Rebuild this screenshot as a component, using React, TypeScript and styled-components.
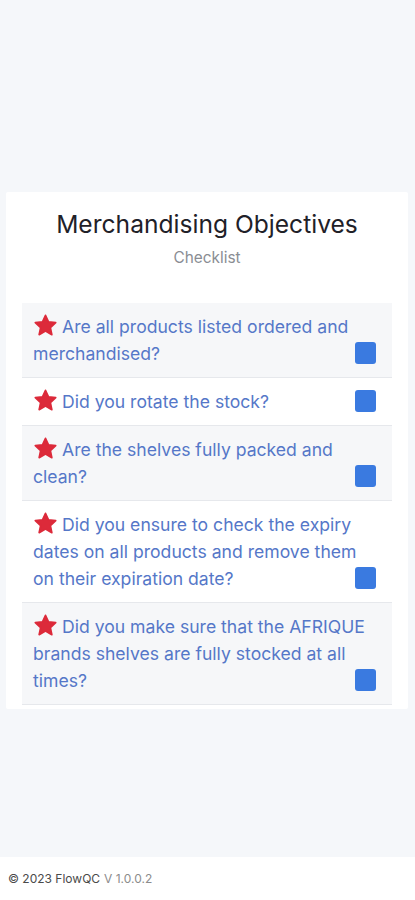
import React from "react";
import styled, { createGlobalStyle } from "styled-components";

const Global = createGlobalStyle`
  html, body { margin: 0; padding: 0; }
  body { background: #f5f7fa; font-family: Inter, "Noto Sans", sans-serif; }
`;

const Page = styled.div`
  min-height: 900px;
  display: flex;
  flex-direction: column;
`;

const Main = styled.main`
  padding: 192px 7px 0 6px;
`;

const Card = styled.section`
  background: #ffffff;
  padding: 17px 16px 4px 16px;
  border-radius: 2px;
`;

const Title = styled.h1`
  margin: 0;
  text-align: center;
  font-size: 24.6px;
  line-height: 30px;
  font-weight: 400;
  color: #1f2128;
`;

const Subtitle = styled.p`
  margin: 9px 0 0;
  text-align: center;
  font-size: 15.4px;
  line-height: 20px;
  color: #8a8d93;
`;

const List = styled.ul`
  list-style: none;
  margin: 35px 0 0;
  padding: 0;
`;

const Item = styled.li<{ $alt: boolean }>`
  display: grid;
  background: ${(p) => (p.$alt ? "#f6f7f9" : "#ffffff")};
  border-bottom: 1px solid #e6e8ec;
  padding: 10px 16px 10px 11px;
`;

const Question = styled.span`
  grid-area: 1 / 1;
  font-size: 17.6px;
  line-height: 27px;
  color: #5577c8;
`;

const Check = styled.span`
  grid-area: 1 / 1;
  justify-self: end;
  align-self: end;
  width: 21px;
  height: 22px;
  margin-bottom: 3px;
  border-radius: 3px;
  background: #3a7ae0;
`;

const StarIcon = styled.svg`
  width: 25px;
  height: 25px;
  vertical-align: -5px;
  margin-right: 4px;
`;

const Footer = styled.footer`
  margin-top: auto;
  background: #ffffff;
  height: 43px;
  display: flex;
  align-items: center;
  padding: 0 8px;
  font-size: 12px;
  color: #4a4a4a;
`;

const Version = styled.span`
  color: #8c8c8c;
  margin-left: 4px;
`;

const Star = () => (
  <StarIcon viewBox="0 0 24 24">
    <path
      d="M12 2.2l2.9 6.3 6.9.8-5.1 4.7 1.4 6.8L12 17.4l-6.1 3.4 1.4-6.8L2.2 9.3l6.9-.8z"
      fill="#dc2a3a"
      stroke="#dc2a3a"
      strokeWidth="1.6"
      strokeLinejoin="round"
    />
  </StarIcon>
);

const questions = [
  "Are all products listed ordered and merchandised?",
  "Did you rotate the stock?",
  "Are the shelves fully packed and clean?",
  "Did you ensure to check the expiry dates on all products and remove them on their expiration date?",
  "Did you make sure that the AFRIQUE brands shelves are fully stocked at all times?",
];

export default function App() {
  return (
    <Page>
      <Global />
      <Main>
        <Card>
          <Title>Merchandising Objectives</Title>
          <Subtitle>Checklist</Subtitle>
          <List>
            {questions.map((q, i) => (
              <Item key={i} $alt={i % 2 === 0}>
                <Question>
                  <Star />
                  {q}
                </Question>
                <Check />
              </Item>
            ))}
          </List>
        </Card>
      </Main>
      <Footer>
        © 2023 FlowQC<Version>V 1.0.0.2</Version>
      </Footer>
    </Page>
  );
}
